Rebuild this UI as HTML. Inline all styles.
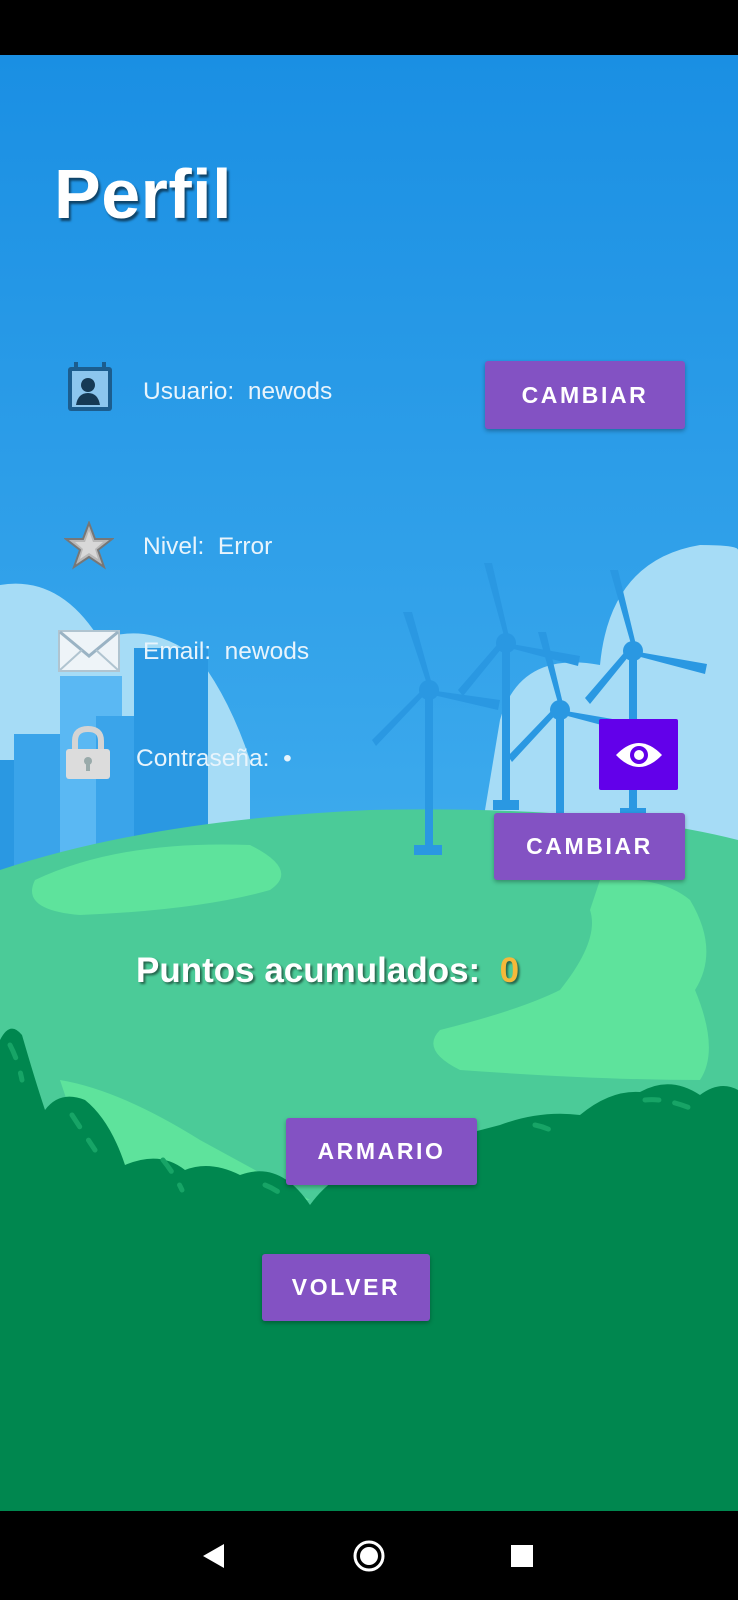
<!DOCTYPE html>
<html><head><meta charset="utf-8"><style>
*{margin:0;padding:0;box-sizing:border-box}
body{width:738px;height:1600px;position:relative;overflow:hidden;font-family:"Liberation Sans",Roboto,sans-serif;background:#000}
svg.bg{position:absolute;left:0;top:0}
.abs{position:absolute}
.t{color:#e8f4fc;font-size:24.5px;line-height:1}
.btn{position:absolute;background:#8352c3;color:#fff;font-size:23px;font-weight:bold;letter-spacing:2.6px;display:flex;align-items:center;justify-content:center;border-radius:3px;box-shadow:0 2px 4px rgba(0,0,0,.3)}
</style></head><body>
<svg class="bg" width="738" height="1600" viewBox="0 0 738 1600">
<defs><linearGradient id="sky" x1="0" y1="0" x2="0" y2="1">
<stop offset="0" stop-color="#1a8fe3"/><stop offset="0.5" stop-color="#3aa8ec"/><stop offset="1" stop-color="#5fc3f2"/></linearGradient></defs>
<rect x="0" y="55" width="738" height="1456" fill="url(#sky)"/>
<path d="M0 585 Q60 575 100 640 Q150 620 200 660 Q230 700 250 760 L250 860 L0 860Z" fill="#a6dcf6"/>
<path d="M500 720 Q520 650 600 665 Q610 560 700 545 Q738 545 738 550 L738 840 L480 840Z" fill="#a6dcf6"/>
<rect x="0" y="760" width="20" height="110" fill="#2a98e2"/>
<rect x="14" y="734" width="70" height="140" fill="#3aa4ea"/>
<rect x="60" y="676" width="62" height="200" fill="#5ab8f3"/>
<rect x="96" y="716" width="40" height="160" fill="#3aa4ea"/>
<rect x="134" y="648" width="74" height="230" fill="#2a98e2"/>
<path d="M0 870 Q150 820 370 810 Q600 805 738 840 L738 1511 L0 1511Z" fill="#4bcb98"/>
<path d="M35 880 Q120 840 250 845 Q300 870 270 890 Q200 910 80 915 Q20 910 35 880Z" fill="#5ee39c"/>
<path d="M600 880 Q660 875 690 900 Q720 950 695 990 Q720 1050 700 1080 Q600 1080 460 1070 Q420 1050 440 1030 Q520 1010 560 990 Q600 940 590 910Z" fill="#5ee39c"/>
<path d="M60 1080 Q120 1090 200 1140 L310 1200 L100 1200Z" fill="#5ee39c"/>
<g fill="#2a98e2">
<rect x="425" y="690" width="8" height="160"/><rect x="414" y="845" width="28" height="10"/>
<circle cx="429" cy="690" r="10"/>
<path d="M429 690 L403 612 L412 612 L433 688Z M429 690 L500 700 L498 710 L429 694Z M429 690 L376 746 L372 740 L426 686Z"/>
<rect x="502" y="643" width="8" height="160"/><rect x="493" y="800" width="26" height="10"/>
<circle cx="506" cy="643" r="10"/>
<path d="M506 643 L484 563 L492 563 L510 641Z M506 643 L580 656 L578 666 L506 647Z M506 643 L463 696 L458 690 L502 639Z"/>
<rect x="556" y="710" width="8" height="110"/>
<circle cx="560" cy="710" r="10"/>
<path d="M560 710 L538 632 L546 632 L564 708Z M560 710 L630 722 L628 732 L560 714Z M560 710 L512 762 L508 756 L556 706Z"/>
<rect x="629" y="651" width="8" height="170"/><rect x="620" y="808" width="26" height="10"/>
<circle cx="633" cy="651" r="10"/>
<path d="M633 651 L610 570 L618 570 L637 649Z M633 651 L707 664 L705 674 L633 655Z M633 651 L590 704 L585 698 L629 647Z"/>
</g>
<path d="M0 1040 Q10 1020 22 1035 Q35 1080 45 1110 Q60 1090 85 1100 Q110 1120 125 1165 Q160 1150 185 1170 Q210 1160 240 1175 Q280 1160 310 1205 Q335 1170 380 1160 Q440 1140 500 1125 Q540 1110 580 1115 Q610 1090 640 1092 Q670 1075 700 1095 Q720 1080 738 1090 L738 1511 L0 1511Z" fill="#00874f"/>
<g stroke="#17a466" stroke-width="5" fill="none" stroke-linecap="round" stroke-dasharray="14 16">
<path d="M10 1045 Q18 1060 22 1080"/><path d="M72 1115 Q85 1135 95 1150"/><path d="M163 1160 Q175 1175 182 1190"/><path d="M265 1185 Q278 1190 288 1200"/><path d="M535 1125 Q550 1128 562 1137"/><path d="M645 1100 Q665 1098 690 1108"/>
</g>
<rect x="0" y="0" width="738" height="55" fill="#000"/>
<rect x="0" y="1511" width="738" height="89" fill="#000"/>
<path d="M203 1556 L224 1544 L224 1568Z" fill="#fff"/>
<circle cx="369" cy="1556" r="14" fill="none" stroke="#fff" stroke-width="3"/><circle cx="369" cy="1556" r="9" fill="#fff"/>
<rect x="511" y="1545" width="22" height="22" fill="#fff"/>
</svg>

<div class="abs" style="left:54px;top:154px;font-size:70px;font-weight:bold;color:#fff;letter-spacing:0.5px;text-shadow:2px 3px 2px rgba(0,0,0,.55)">Perfil</div>

<svg class="abs" style="left:66px;top:361px" width="48" height="52" viewBox="0 0 48 52">
<rect x="2" y="6" width="44" height="44" rx="3" fill="#1c5d8e"/><rect x="6" y="10" width="36" height="36" fill="#8cc6ee"/>
<circle cx="22" cy="24" r="7" fill="#163a55"/><path d="M10 44 Q12 32 22 32 Q32 32 34 44Z" fill="#163a55"/>
<rect x="8" y="1" width="4" height="8" fill="#1c5d8e"/><rect x="36" y="1" width="4" height="8" fill="#1c5d8e"/>
</svg>
<div class="abs t" style="left:143px;top:380px">Usuario:&nbsp; newods</div>
<div class="btn" style="left:485px;top:361px;width:200px;height:68px">CAMBIAR</div>

<svg class="abs" style="left:64px;top:521px" width="50" height="49" viewBox="0 0 50 49">
<path d="M25 2 L31 18 L48 18 L34 29 L40 46 L25 36 L10 46 L16 29 L2 18 L19 18Z" fill="#b8b8b8" stroke="#777" stroke-width="2"/>
<path d="M25 10 L29 21 L39 21 L31 28 L34 38 L25 32 L16 38 L19 28 L11 21 L21 21Z" fill="#d8d8d8"/>
</svg>
<div class="abs t" style="left:143px;top:535px">Nivel:&nbsp; Error</div>

<svg class="abs" style="left:58px;top:628px" width="62" height="46" viewBox="0 0 62 46">
<rect x="1" y="3" width="60" height="40" fill="#eef4f8" stroke="#b0c4d0" stroke-width="2"/>
<path d="M2 4 L31 28 L60 4" fill="none" stroke="#9ab3c4" stroke-width="3"/>
<path d="M2 42 L24 22 M60 42 L38 22" stroke="#b0c4d0" stroke-width="2"/>
</svg>
<div class="abs t" style="left:143px;top:640px">Email:&nbsp; newods</div>

<svg class="abs" style="left:64px;top:725px" width="48" height="56" viewBox="0 0 48 56">
<path d="M11 26 V16 Q11 4 24 4 Q37 4 37 16 V26" fill="none" stroke="#d4d4d4" stroke-width="6"/>
<rect x="2" y="24" width="44" height="30" rx="3" fill="#dcdcdc"/>
<circle cx="24" cy="36" r="4" fill="#9aa"/><rect x="22" y="37" width="4" height="9" fill="#9aa"/>
</svg>
<div class="abs t" style="left:136px;top:747px">Contraseña:&nbsp; •</div>

<div class="abs" style="left:599px;top:719px;width:79px;height:71px;background:#6200ea;border-radius:2px;display:flex;align-items:center;justify-content:center">
<svg width="50" height="32" viewBox="0 0 50 32"><path d="M2 16 Q25 -8 48 16 Q25 40 2 16Z" fill="#fff"/><circle cx="25" cy="16" r="9" fill="#6200ea"/><circle cx="25" cy="16" r="5" fill="#fff"/></svg>
</div>
<div class="btn" style="left:494px;top:813px;width:191px;height:67px">CAMBIAR</div>

<div class="abs" style="left:136px;top:951px;font-size:35px;font-weight:bold;color:#fff;text-shadow:2px 2px 2px rgba(0,0,0,.5)">Puntos acumulados:&nbsp; <span style="color:#f5b93a">0</span></div>

<div class="btn" style="left:286px;top:1118px;width:191px;height:67px">ARMARIO</div>
<div class="btn" style="left:262px;top:1254px;width:168px;height:67px">VOLVER</div>
</body></html>
